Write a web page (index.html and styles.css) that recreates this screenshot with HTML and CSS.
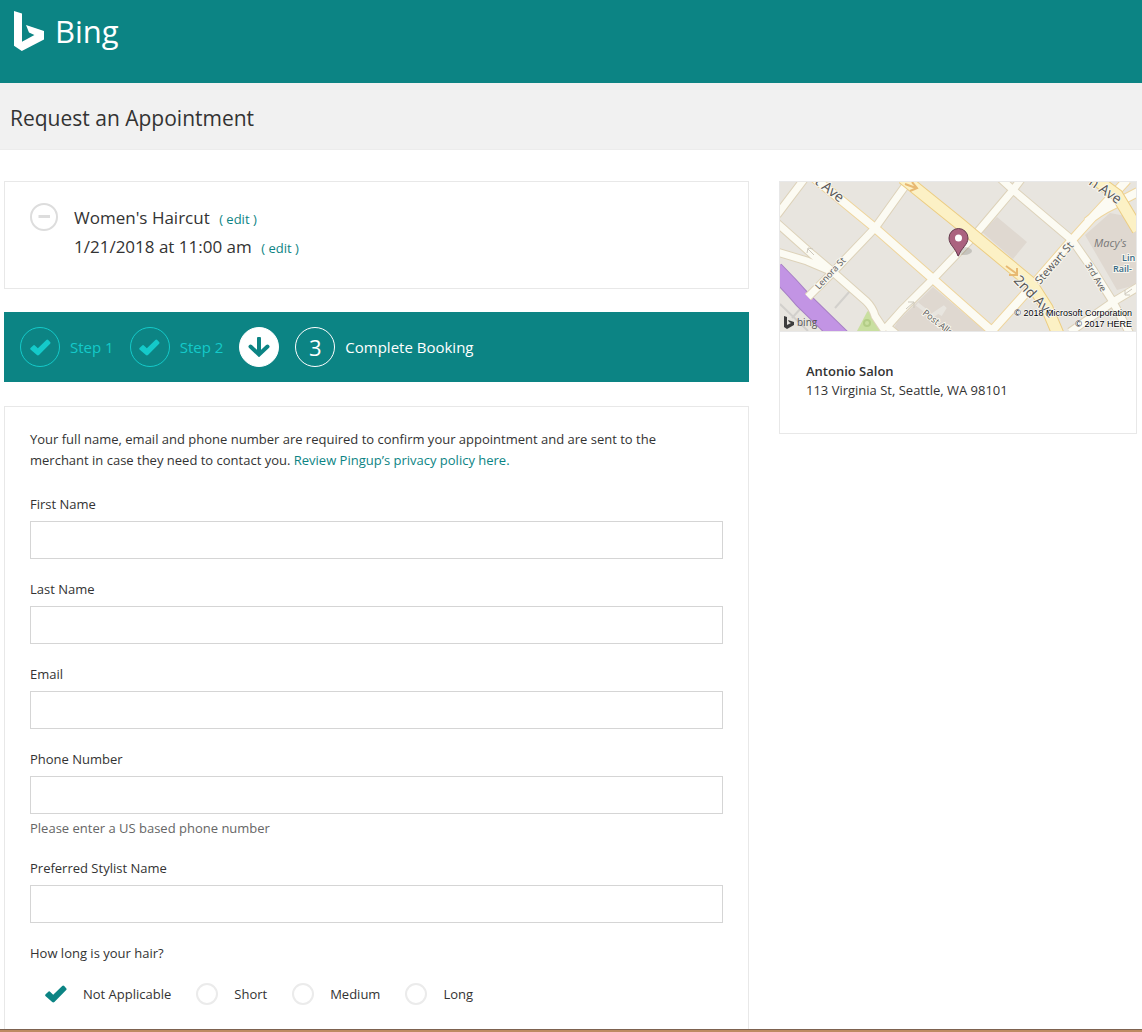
FILE: index.html
```html
<!DOCTYPE html>
<html lang="en">
<head>
<meta charset="utf-8">
<meta name="viewport" content="width=device-width, initial-scale=1">
<title>Request an Appointment</title>
<link rel="stylesheet" href="styles.css">
</head>
<body>
<svg class="sprite" aria-hidden="true">
  <symbol id="check" viewBox="0 0 24 18">
    <path d="M1.4 9.6 4.6 6.6Q5.2 6.1 5.8 6.6L9.2 9.8 18.2 1Q19.2 .2 20.2 1L22.4 3.4Q23 4.2 22.2 5L10.4 17Q9.2 17.8 8.2 17L1.4 11Q.8 10.2 1.4 9.6Z" fill="currentColor"/>
  </symbol>
</svg>
<header class="topbar">
  <a class="brand" href="#">
    <svg class="brand-mark" viewBox="0 0 30 40" aria-hidden="true"><path d="M0 0 8 2.4V30.7L20.4 24 15 21.6 12 14 30 20V28.4L7.8 40 0 34.8Z" fill="#fff"/></svg>
    <span>Bing</span>
  </a>
</header>
<div class="titlebar"><h1>Request an Appointment</h1></div>
<main class="page">
  <div class="main-col">
    <section class="card summary">
      <button class="remove" type="button" aria-label="Remove">
        <svg viewBox="0 0 28 28" aria-hidden="true"><circle cx="14" cy="14" r="13" fill="none" stroke="#ddd" stroke-width="2"/><path d="M8.500 13.500H20" stroke="#ddd" stroke-width="3"/></svg>
      </button>
      <div class="summary-lines">
        <p>Women's Haircut <a href="#">( edit )</a></p>
        <p>1/21/2018 at 11:00 am <a href="#">( edit )</a></p>
      </div>
    </section>
    <ol class="steps">
      <li class="step done"><span class="bubble"><svg class="step-check"><use href="#check"/></svg></span>Step 1</li>
      <li class="step done"><span class="bubble"><svg class="step-check"><use href="#check"/></svg></span>Step 2</li>
      <li class="step"><span class="bubble solid"><svg class="step-arrow" viewBox="0 0 22 20" aria-hidden="true"><path d="M11 1.500V17M2.500 9.500 11 17.500 19.500 9.500" fill="none" stroke="#0c8484" stroke-width="4" stroke-linecap="round"/></svg></span></li>
      <li class="step current"><span class="bubble">3</span>Complete Booking</li>
    </ol>
    <form class="card details">
      <p class="intro">Your full name, email and phone number are required to confirm your appointment and are sent to the merchant in case they need to contact you. <a href="#">Review Pingup’s privacy policy here.</a></p>
      <div class="field"><label for="first">First Name</label><input id="first" type="text"></div>
      <div class="field"><label for="last">Last Name</label><input id="last" type="text"></div>
      <div class="field"><label for="email">Email</label><input id="email" type="email"></div>
      <div class="field"><label for="phone">Phone Number</label><input id="phone" type="tel" aria-describedby="phone-hint"><p class="hint" id="phone-hint">Please enter a US based phone number</p></div>
      <div class="field"><label for="stylist">Preferred Stylist Name</label><input id="stylist" type="text"></div>
      <fieldset class="choices">
        <legend>How long is your hair?</legend>
        <div class="options">
          <label class="option"><span class="pick"><input type="radio" name="hair" checked><svg class="pick-check"><use href="#check"/></svg></span>Not Applicable</label>
          <label class="option"><span class="pick"><input type="radio" name="hair"><svg class="pick-check"><use href="#check"/></svg></span>Short</label>
          <label class="option"><span class="pick"><input type="radio" name="hair"><svg class="pick-check"><use href="#check"/></svg></span>Medium</label>
          <label class="option"><span class="pick"><input type="radio" name="hair"><svg class="pick-check"><use href="#check"/></svg></span>Long</label>
        </div>
      </fieldset>
    </form>
  </div>
  <aside class="card venue">
    <svg class="map" viewBox="0 0 356 149" role="img" aria-label="Map of Antonio Salon">
      <rect width="356" height="149" fill="#e8e5df"/>
      <path d="M217 35 247 60 233 77 202 50Z M153 105 205 149H112L118 139Z M330 31 356 36V103L337 108 305 53Z" fill="#dfd8d0"/>
      <path d="M137 122 146 129M160 133 165 125 150 135" stroke="#e8e5df" stroke-width="4" fill="none"/>
      <path d="M77 149 87 130Q90 126 92 130L100 149Z" fill="#c9dfa0"/>
      <circle cx="87" cy="141" r="3" fill="none" stroke="#b3cd86" stroke-width="2"/>
      <path d="M0 122 28 149M12 136 22 125M55 126 70 109" stroke="#d2d0cc" stroke-width="2" fill="none"/>
      <path d="M-5 88Q10 103 23 118L62 156" stroke="#a780c4" stroke-width="18" fill="none"/>
      <path d="M-5 88Q10 103 23 118L62 156" stroke="#c294e4" stroke-width="16" fill="none"/>
      <g fill="none" stroke="#ddd2b9" stroke-width="9">
        <path d="M128 0 95 46 53 90 28 115M25-4-3 33M-3 41 33 73 53 90 86 119Q93 126 95 134L105 149M-3 70 27 79 53 90M105 147 122 128 153 97 195 53 233 8 245-8M105 143 116 152M220-4 233 8 292 58 313 88 333 120 350 152M358 105 333 120 290 150"/>
      </g>
      <g fill="none" stroke="#efd59c" stroke-width="10">
        <path d="M33-5 95 46 153 97 213 150M209 152 253 103 292 58 310 38 347-2M307 40Q318 30 333 23L358 10"/>
      </g>
      <g fill="none" stroke="#fcfbf3">
        <path stroke-width="7" d="M128 0 95 46 53 90 28 115M25-4-3 33M-3 41 33 73 53 90 86 119Q93 126 95 134L105 149M-3 70 27 79 53 90M105 147 122 128 153 97 195 53 233 8 245-8M105 143 116 152M220-4 233 8 292 58 313 88 333 120 350 152M358 105 333 120 290 150"/>
        <path stroke-width="8" d="M33-5 95 46 153 97 213 150M209 152 253 103 292 58 310 38 347-2M307 40Q318 30 333 23L358 10"/>
      </g>
      <path d="M123-4 180 42 193 53 251 101 267 126 278 152M311-6 337 13 358 48" fill="none" stroke="#eccd83" stroke-width="13"/>
      <path d="M123-4 180 42 193 53 251 101 267 126 278 152M311-6 337 13 358 48" fill="none" stroke="#fcf1c5" stroke-width="11"/>
      <path d="M125 2 136 6M132 0 137 6 130 9M226 84 237 92M237 86V93H229" stroke="#e8b972" stroke-width="2" fill="none"/>
      <path d="M28 67 34 73M27 71 28 66 33 67M126 127 134 120M128 120H134V126M345 112 352 107M345 108V113H350" stroke="#cdc8bc" stroke-width="1" fill="none"/>
      <g class="streets">
        <text class="avenue" transform="translate(34 1) rotate(38)">t Ave</text>
        <text transform="translate(39 108) rotate(-47)">Lenora St</text>
        <text transform="translate(142 132) rotate(38)">Post Alley</text>
        <text class="avenue" transform="translate(233 99) rotate(46)">2nd Ave</text>
        <text class="stewart" transform="translate(260 103) rotate(-49)">Stewart St</text>
        <text transform="translate(305 83) rotate(59)">3rd Ave</text>
        <text class="avenue" transform="translate(308 2) rotate(35)">h Ave</text>
        <text class="place" x="314" y="65">Macy's</text>
        <text class="rail" x="342" y="79">Lin</text>
        <text class="rail" x="333" y="90">Rail-</text>
      </g>
      <ellipse cx="184" cy="69" rx="8" ry="4" fill="#000" opacity=".15"/>
      <path d="M178 74C175 65 169 63 169 56A9.500 9.500 0 0 1 188 56C188 63 181 66 178.500 74Z" fill="#ab627f" stroke="#65394c"/>
      <circle cx="178.500" cy="56" r="3.500" fill="#fff"/>
      <path d="M4 134 7 135V143L11 141 9 140 8 138 14 140V143L7 147 4 145Z" fill="#3d3d3d"/>
      <text class="map-bing" x="17" y="144">bing</text>
      <text class="credit" x="352" y="134">© 2018 Microsoft Corporation</text>
      <text class="credit" x="352" y="145">© 2017 HERE</text>
    </svg>
    <address class="place-info"><strong>Antonio Salon</strong>113 Virginia St, Seattle, WA 98101</address>
  </aside>
</main>
<footer class="edge"></footer>
</body>
</html>
```
FILE: styles.css
```css
* { box-sizing: border-box; }

body {
  margin: 0;
  min-height: 100vh;
  display: flex;
  flex-direction: column;
  background: #fff;
  color: #333;
  font: 13px/20px "Open Sans", "Noto Sans", sans-serif;
}

p, h1, ol { margin: 0; padding: 0; }
a { color: #0c8484; text-decoration: none; }
.sprite { position: absolute; width: 0; height: 0; }

.topbar { display: flex; background: #0c8484; padding: 11px 14px 32px; }
.brand { display: flex; gap: 11px; color: #fff; font-size: 31px; line-height: 40px; }
.brand-mark { width: 30px; height: 40px; }

.titlebar { background: #f1f1f1; padding: 20px 10px 15px; border-bottom: 1px solid #ececec; }
.titlebar h1 { font-size: 21px; font-weight: 400; line-height: 31px; }

.page {
  flex: 1;
  display: grid;
  grid-template-columns: 745fr 358fr;
  gap: 30px;
  padding: 31px 5px 0 4px;
}
.main-col { display: flex; flex-direction: column; }
.card { border: 1px solid #e8e8e8; background: #fff; }

.summary { display: flex; gap: 16px; padding: 21px 25px 27px; margin-bottom: 23px; }
.remove { width: 28px; height: 28px; padding: 0; border: 0; background: none; }
.remove svg { display: block; }
.summary-lines { font-size: 17px; line-height: 29px; }
.summary-lines a { margin-left: 5px; font-size: 13px; line-height: 20px; }

.steps {
  display: flex;
  gap: 16px;
  align-items: center;
  padding: 15px 16px;
  margin-bottom: 24px;
  background: #0c8484;
  list-style: none;
  font-size: 15px;
}
.step { display: flex; align-items: center; gap: 10px; color: #fff; }
.done { color: #14caca; }
.bubble {
  display: flex;
  align-items: center;
  justify-content: center;
  width: 40px;
  height: 40px;
  border: 1px solid;
  border-radius: 50%;
  font-size: 22px;
}
.solid { background: #fff; }
.step-check { width: 23px; height: 17px; }
.step-arrow { width: 22px; height: 20px; }

.details { flex: 1; padding: 22px 25px 11px; border-bottom: 0; }
.intro { padding-right: 25px; line-height: 21px; margin-bottom: 23px; }
.field { display: flex; flex-direction: column; margin-bottom: 20px; }
.field input {
  width: 100%;
  height: 38px;
  margin-top: 7px;
  padding: 0 10px;
  border: 1px solid #d5d5d5;
  background: #fff;
  font: inherit;
}
.hint { margin-top: 4px; color: #666; }

.choices { margin: 0; padding: 0; border: 0; }
.choices legend { padding: 0; }
.options { display: flex; flex-wrap: wrap; gap: 24px; padding: 19px 14px 11px; }
.option { display: flex; align-items: center; gap: 15px; }
.pick { display: grid; place-items: center; width: 24px; height: 24px; }
.pick > * { grid-area: 1 / 1; }
.pick input {
  appearance: none;
  width: 22px;
  height: 22px;
  margin: 0;
  border: 2px solid #ebebeb;
  border-radius: 50%;
}
.pick input:checked { border-color: transparent; }
.pick-check { display: none; width: 24px; height: 18px; color: #0c8484; }
.pick input:checked + .pick-check { display: block; }

.venue { align-self: start; }
.map { display: block; width: 100%; height: auto; }
.streets { fill: #555; font-size: 9px; stroke: #f8f6ee; stroke-width: 2px; paint-order: stroke; }
.streets .avenue { font-size: 14px; }
.streets .stewart { font-size: 11px; }
.streets .place { font-size: 11px; font-style: italic; fill: #777; stroke: none; }
.streets .rail { font-size: 9px; font-weight: 600; fill: #396b88; }
.map-bing { font-size: 10px; fill: #555; }
.credit { font: 9px "Liberation Sans", Arial, sans-serif; text-anchor: end; fill: #000; stroke: #fff; stroke-width: 1px; paint-order: stroke; }
.place-info { display: flex; flex-direction: column; padding: 30px 26px 33px; border-top: 1px solid #e8e8e8; font-style: normal; line-height: 19px; }
.place-info strong { font-weight: 600; }

.edge { height: 3px; background: #bd8a62; border-top: 1px solid #7d6250; }
```
